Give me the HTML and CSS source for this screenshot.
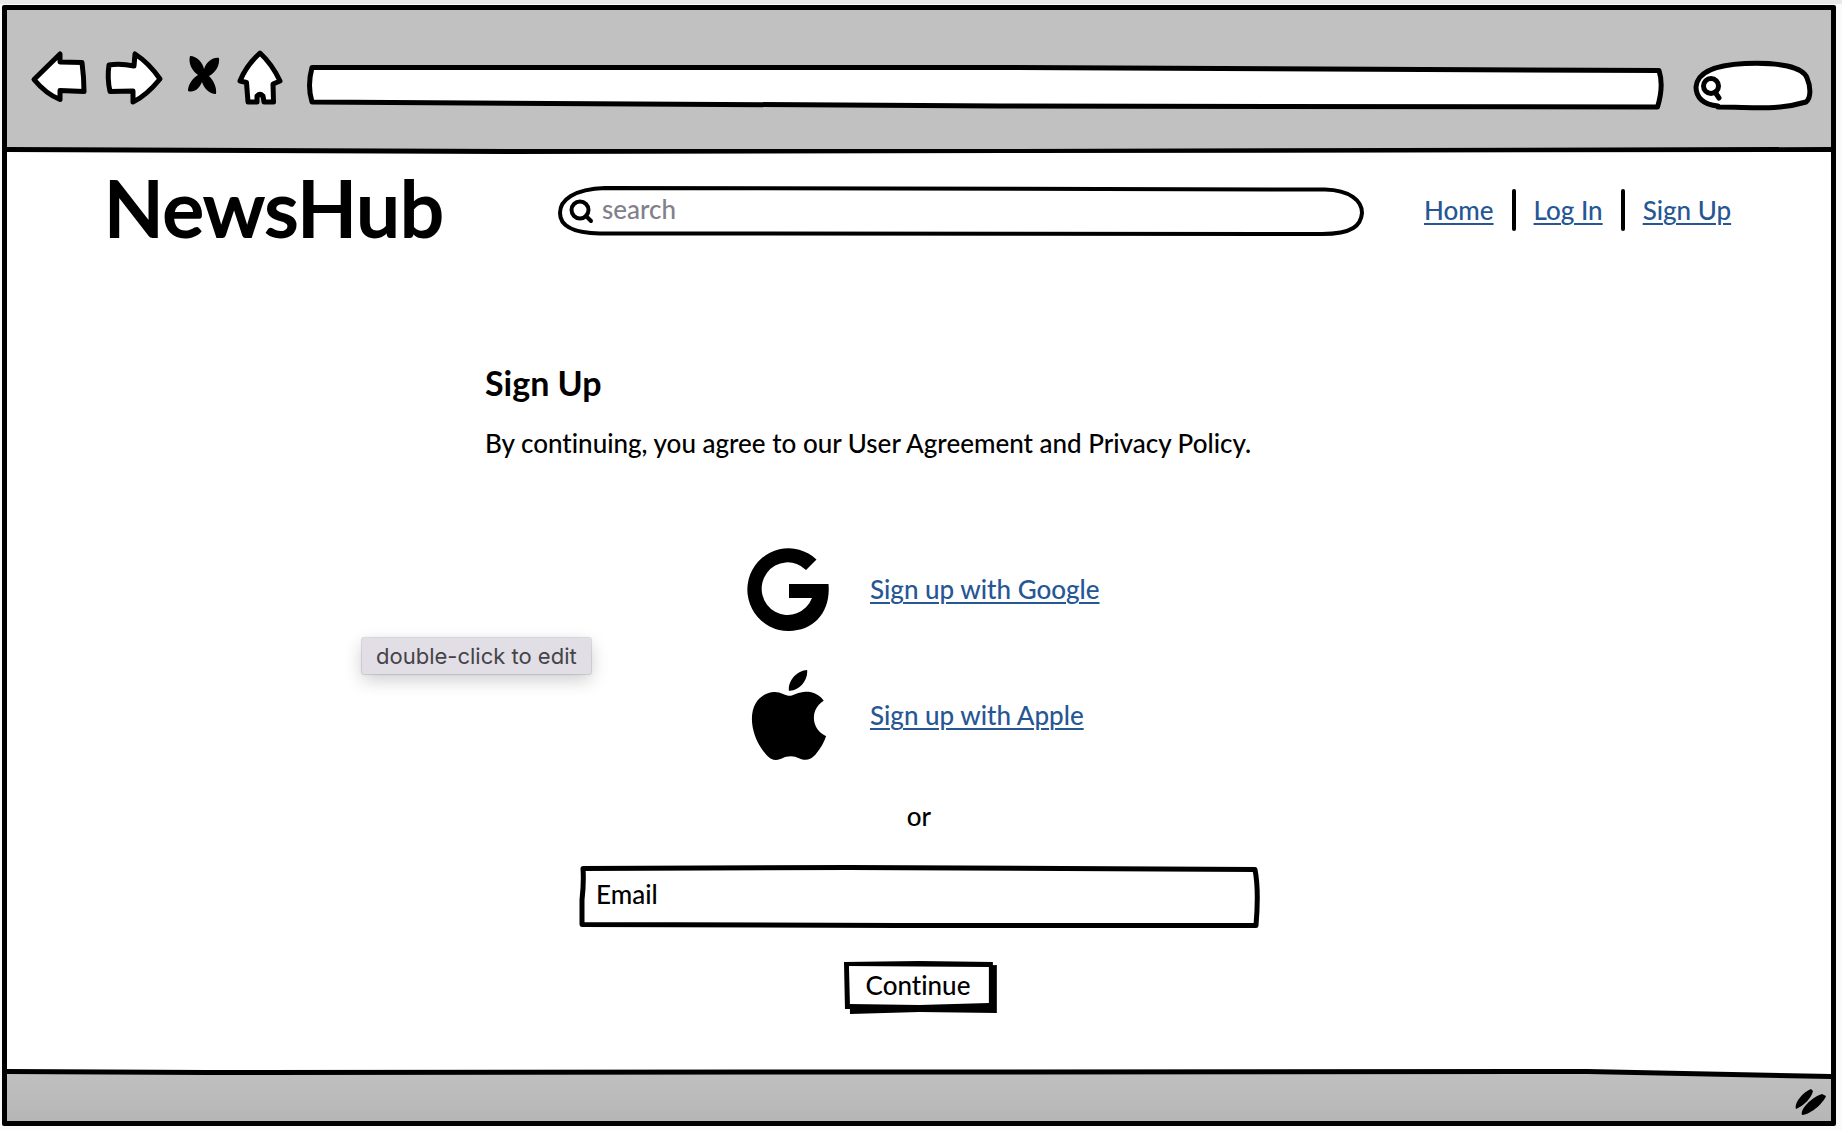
FILE: index.html
```html
<!DOCTYPE html>
<html lang="en">
<head>
<meta charset="utf-8">
<title>NewsHub – Sign Up</title>
<link rel="stylesheet" href="styles.css">
</head>
<body>
<div class="window">
  <div class="toolbar">
    <button class="tool" aria-label="Back"><svg width="60" height="64" viewBox="28 48 60 64"><path d="M34 79.500L60 54 60 62 82 62.500Q84 78 84 91.500L60 90.500V99.500Q46 94 34 79.500Z"/></svg></button>
    <button class="tool" aria-label="Forward"><svg width="60" height="64" viewBox="104 48 60 64"><path d="M135 54L134 66Q120 63 109 65 107 78 110 91.500L133 91V102Q146 96 160 79 149 63 135 54Z"/></svg></button>
    <button class="tool" aria-label="Stop"><svg width="40" height="64" viewBox="180 48 40 64"><path class="solid" d="M190 56C197 56 203 63 204 69 207 61 213 57 219 58 220 66 215 73 209 76 214 81 217 88 216 94 209 94 204 88 202 82 199 89 194 93 188 91 188 84 193 78 198 75 192 71 188 63 190 56Z"/></svg></button>
    <button class="tool" aria-label="Home page"><svg width="48" height="64" viewBox="236 48 48 64"><path d="M260 53Q246 66 240 81L246.500 82.500 248 102H257V96Q260 93 263 96L264 102H273.500L273 84 280 81Q272 64 260 53Z"/></svg></button>
    <div class="address sketch">
      <svg viewBox="300 48 1372 64" preserveAspectRatio="none"><path d="M312 67.500L1000 67.500 1659 70.500Q1664 86 1657.500 107L1000 106 312 102Q307 86 312 67.500Z"/></svg>
      <input class="field" type="text" aria-label="Address">
    </div>
    <div class="quickfind sketch">
      <svg viewBox="1688 48 128 64" preserveAspectRatio="none"><path d="M1718 106C1703 105 1696 97 1696 87 1697 73 1714 65 1745 63.500 1779 62 1803 67 1807 78 1811 87 1811 98 1806 102 1776 111 1753 107 1718 107"/><circle cx="1711" cy="86" r="7.500"/><path d="M1715 92L1719 98"/></svg>
      <input class="field" type="search" aria-label="Quick search">
    </div>
  </div>
  <svg class="rule" viewBox="0 0 1824 8" preserveAspectRatio="none"><path class="shade" d="M0 0H1824V3H0Z"/><path class="solid" d="M0 0L500 2H1000L1824 0V5L1000 6 500 7 0 5Z"/></svg>

  <header class="header">
    <div class="logo">NewsHub</div>
    <form class="search sketch" role="search">
      <svg viewBox="558 184 808 54" preserveAspectRatio="none"><path d="M605 188L1325 189.500C1350 190 1362 201 1362 213 1361 225 1353 234 1322 234L600 233.500C573 233 560 226 560 213 560 200 574 189 605 188Z"/></svg>
      <svg class="lens" width="26" height="26" viewBox="0 0 26 26"><circle cx="11" cy="11" r="8.500"/><path d="M17 17L22 22"/></svg>
      <input class="field" type="search" placeholder="search" aria-label="Search">
    </form>
    <nav class="nav">
      <a href="#">Home</a><span class="bar"></span><a href="#">Log In</a><span class="bar"></span><a href="#">Sign Up</a>
    </nav>
  </header>

  <main class="main">
    <h1>Sign Up</h1>
    <p class="terms">By continuing, you agree to our User Agreement and Privacy Policy.</p>
    <ul class="providers">
      <li><svg width="82" height="90" viewBox="748 545 82 90"><path class="solid" d="M806 571A26 26.300 0 1 0 812 599H789V585H828.500C831 613 814 632 789 632A41 41.400 0 1 1 816.500 560.500Z"/></svg><a href="#">Sign up with Google</a></li>
      <li><svg width="82" height="90" viewBox="1.200 0 21.600 24" preserveAspectRatio="none"><path class="solid" d="M12.152 6.896c-.948 0-2.415-1.078-3.960-1.040-2.040.027-3.910 1.183-4.961 3.014-2.117 3.675-.546 9.103 1.519 12.090 1.013 1.454 2.208 3.090 3.792 3.039 1.520-.065 2.090-.987 3.935-.987 1.831 0 2.350.987 3.960.948 1.637-.026 2.676-1.480 3.676-2.948 1.156-1.688 1.636-3.325 1.662-3.415-.039-.013-3.182-1.221-3.220-4.857-.026-3.040 2.480-4.494 2.597-4.559-1.429-2.090-3.623-2.324-4.390-2.376-2-.156-3.675 1.090-4.610 1.090zM15.530 3.830c.843-1.012 1.400-2.427 1.245-3.830-1.207.052-2.662.805-3.532 1.818-.780.896-1.454 2.338-1.273 3.714 1.338.104 2.715-.688 3.559-1.701"/></svg><a href="#">Sign up with Apple</a></li>
    </ul>
    <p class="or">or</p>
    <form class="signup">
      <div class="email sketch">
        <svg viewBox="580 864 682 64" preserveAspectRatio="none"><path d="M585 868.500L850 867.500 1257 869.500Q1261 890 1258 925.500L900 925.500 584 924.500 584 900Q586 882 585 868.500Z"/></svg>
        <input class="field" type="email" placeholder="Email" aria-label="Email">
      </div>
      <button class="continue sketch" type="button">
        <svg viewBox="842 960 156 56" preserveAspectRatio="none"><path class="solid" d="M850 972L998 965V1013L920 1012 850 1014V1009H845L844 962 920 961 994 962V980Z"/><path class="paper" d="M849 966L990 967V1003L920 1005 850 1004Z"/></svg>
        <span>Continue</span>
      </button>
    </form>
  </main>

  <footer class="status">
    <svg class="edge" viewBox="0 0 1824 10" preserveAspectRatio="none"><path class="paper" d="M0 0H1824V6L1500 2H0Z"/><path class="solid" d="M0 0L200 1 1580 0 1824 5V10L1580 5 200 6 0 5Z"/></svg>
    <svg class="grip" width="36" height="32" viewBox="1792 1087 36 32"><path class="solid" d="M1811 1090C1803 1093 1794 1104 1796 1110 1804 1107 1812 1098 1813 1092ZM1822 1095C1812 1098 1800 1110 1802 1116 1812 1115 1824 1103 1826 1097Z"/></svg>
  </footer>
  <div class="tooltip" role="tooltip">double-click to edit</div>
</div>
</body>
</html>
```

FILE: styles.css
```css
* { box-sizing: border-box; }

body {
  margin: 0;
  padding: 1px 6px 4px 2px;
  min-height: 100vh;
  display: flex;
  background: #fafafa;
  border-top: 4px solid #e9e9e9;
  font-family: Lato, "Liberation Sans", sans-serif;
  font-size: 26px;
  line-height: 32px;
  font-weight: 500;
  font-variant-ligatures: none;
  color: #000;
}

.window {
  position: relative;
  flex: 1;
  display: flex;
  flex-direction: column;
  background: #fff;
  border: 5px solid #000;
  border-radius: 2px;
}

svg { display: block; overflow: visible; }

path, circle {
  fill: #fff;
  stroke: #000;
  stroke-width: 5px;
  stroke-linejoin: round;
  stroke-linecap: round;
}

.solid { fill: #000; stroke: none; }
.paper { fill: #fff; stroke: none; }
.shade { fill: #c1c1c1; stroke: none; }

button {
  border: 0;
  padding: 0;
  background: none;
  font: inherit;
  font-variant-ligatures: none;
  color: inherit;
}

a { color: #265794; text-decoration-thickness: 2px; text-underline-offset: 3px; }

/* Hand-drawn outline stretched behind a control */
.sketch { position: relative; }
.sketch > svg:first-child {
  position: absolute;
  inset: 0;
  width: 100%;
  height: 100%;
}

.field {
  position: relative;
  width: 100%;
  height: 100%;
  border: 0;
  outline: 0;
  background: none;
  font: inherit;
  color: inherit;
  appearance: none;
}

.toolbar {
  display: flex;
  gap: 16px;
  padding: 38px 15px 35px 21px;
  background: #c1c1c1;
}

.address { flex: 1; height: 64px; }
.address .field { padding: 0 20px; }
.quickfind { width: 128px; height: 64px; }
.quickfind .field { padding: 0 16px 0 36px; }

.rule { width: 100%; height: 8px; }

.header {
  display: grid;
  grid-template-columns: 414px 1fr 312px;
  column-gap: 40px;
  align-items: center;
  padding: 8px 95px 16px 97px;
}

.logo {
  padding-bottom: 8px;
  font-size: 78px;
  line-height: 88px;
  -webkit-text-stroke: 2px #000;
}

.search { height: 54px; margin-right: 18px; }
.search path { stroke-width: 4px; }
.search .lens { position: absolute; left: 11px; top: 15px; }
.search .field { padding: 0 40px 4px 44px; }
.search .field::placeholder { color: #82808b; opacity: 1; }
.search .lens * { fill: none; stroke-width: 4px; }

.nav { display: flex; align-items: center; gap: 18px; padding-bottom: 2px; white-space: nowrap; }
.bar { width: 4px; height: 42px; border-radius: 2px; background: #000; }

.main {
  flex: 1;
  width: 868px;
  max-width: 100%;
  margin: 0 auto;
  padding-top: 88px;
}

h1 { margin: 0 0 24px; font-size: 34px; line-height: 40px; font-weight: 700; }
p { margin: 0; }

.providers {
  list-style: none;
  margin: 85px 0 0 263px;
  padding: 0;
  display: grid;
  gap: 36px;
}
.providers li { display: flex; align-items: center; gap: 40px; }

.or { margin: 40px 0 32px; text-align: center; }

.signup { display: flex; flex-direction: column; align-items: center; gap: 32px; }
.email { width: 682px; max-width: 100%; height: 64px; }
.email .field { padding: 0 20px 4px 18px; }
.email .field::placeholder { color: #000; opacity: 1; }

.continue { padding: 9px 26px 15px 24px; }
.continue span { position: relative; }

.status {
  display: flex;
  flex-direction: column;
  align-items: flex-end;
  gap: 7px;
  height: 52px;
  padding-right: 3px;
  background: linear-gradient(#c1c1c1, #b6b6b6);
}
.edge { width: calc(100% + 3px); height: 10px; margin-right: -3px; }

.tooltip {
  position: absolute;
  left: 355px;
  top: 628px;
  padding: 2px 14px;
  border-radius: 2px;
  background: #e1dee5;
  box-shadow: 0 0 1px 1px #0002, 0 6px 18px #0003;
  font-family: Inter, "Liberation Sans", sans-serif;
  font-size: 22px;
  font-weight: 400;
  color: #454348;
}
```
